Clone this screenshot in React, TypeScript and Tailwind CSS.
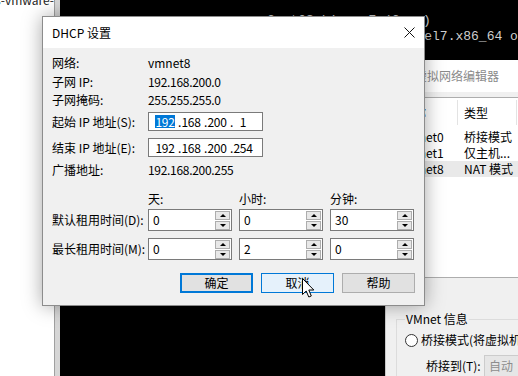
import React from "react";

const ui = "font-['Noto_Sans_CJK_SC',sans-serif]";

function Arrow({ up }: { up?: boolean }) {
  return (
    <div className="flex h-[9px] w-[15px] items-center justify-center border border-[#adadad] bg-[#e8e8e8]">
      {up ? (
        <span className="h-0 w-0 border-x-[3px] border-b-[3px] border-x-transparent border-b-black" />
      ) : (
        <span className="h-0 w-0 border-x-[3px] border-t-[3px] border-x-transparent border-t-black" />
      )}
    </div>
  );
}

function Spin({ value }: { value: string }) {
  return (
    <div className="flex h-[22px] w-[84px] items-center border border-[#7a7a7a] bg-white pr-[1px]">
      <span className="flex-1 pl-[4px] text-[12px] leading-none">{value}</span>
      <div className="flex flex-col gap-[1px]">
        <Arrow up />
        <Arrow />
      </div>
    </div>
  );
}

function IpBox({ parts, selectFirst }: { parts: string[]; selectFirst?: boolean }) {
  return (
    <div className="flex h-[19px] w-[115px] items-center border border-[#7a7a7a] bg-white pl-[7px] text-[12px] leading-[13px] tracking-[-0.4px]">
      {parts.map((p, i) => (
        <React.Fragment key={i}>
          {i > 0 && <span className="w-[8px] shrink-0 pr-[1px] text-right">.</span>}
          <span className="flex w-[18px] shrink-0 justify-center">
            <span className={i === 0 && selectFirst ? "bg-[#0078d7] px-[1px] text-white" : ""}>{p}</span>
          </span>
        </React.Fragment>
      ))}
    </div>
  );
}

function Btn({ label, kind }: { label: string; kind: "default" | "hover" | "plain" }) {
  const cls =
    kind === "default"
      ? "border-2 border-[#0078d7] bg-[#e1e1e1]"
      : kind === "hover"
      ? "border border-[#0078d7] bg-[#e5f1fb]"
      : "border border-[#adadad] bg-[#e1e1e1]";
  return (
    <div className={`flex h-[20px] w-[73px] items-center justify-center text-[12px] ${cls}`}>{label}</div>
  );
}

export default function App() {
  return (
    <div className={`relative flex h-[376px] w-[518px] overflow-hidden bg-white text-black ${ui}`}>
      {/* desktop behind */}
      <div className="flex w-[54px] shrink-0 items-start justify-end overflow-hidden bg-white">
        <div className="mt-[-8px] shrink-0 whitespace-nowrap text-[12px] leading-[16px] text-[#222]">centos-vmware-</div>
      </div>
      <div className="w-[6px] shrink-0 border-l border-[#a0a0a0] bg-[#d6d6d6]" />
      <div className="min-w-0 flex-1 overflow-hidden bg-black pt-[13px] font-['Liberation_Mono',monospace] text-[13px] leading-[16px] text-[#cfcfcf]">
        <div className="whitespace-pre pl-[207px]">CentOS Linux 7 (Core)</div>
        <div className="whitespace-pre pl-[216px]">Kernel 3.10.0-1160.el7.x86_64 on an x86_64</div>
      </div>

      {/* virtual network editor window */}
      <div className="absolute bottom-0 left-[385px] top-[60px] w-[140px] border-l border-[#c8c8c8] bg-[#f0f0f0]">
        <div className="flex h-[32px] items-center bg-white pl-[29px] text-[12px] text-[#8a8a8a]">虚拟网络编辑器</div>
        <div className="ml-[10px] mt-[5px] h-[181px] border border-[#adadad] bg-white text-[12px]">
          <div className="mt-[2px] flex h-[25px] items-center">
            <div className="h-full w-[61px] border-r border-[#e3e3e3] pl-[5px] leading-[25px]">名称</div>
            <div className="h-full w-[59px] border-r border-[#e3e3e3] pl-[6px] leading-[25px]">类型</div>
          </div>
          <div className="mt-[4px] flex flex-col">
            {[
              ["VMnet0", "桥接模式", false],
              ["VMnet1", "仅主机...", false],
              ["VMnet8", "NAT 模式", true],
            ].map(([n, t, sel]) => (
              <div key={n as string} className={`flex h-[16px] items-center ${sel ? "bg-[#e9e9e9]" : ""}`}>
                <div className="w-[61px] pl-[5px]">{n}</div>
                <div className="pl-[6px]">{t}</div>
              </div>
            ))}
          </div>
        </div>
        <fieldset className="ml-[10px] mt-[33px] h-[80px] border border-[#dcdcdc] pl-[8px] text-[12px]">
          <legend className="px-[1px] leading-[16px]">VMnet 信息</legend>
          <div className="mt-[5px] flex h-[16px] items-center gap-[3px] whitespace-nowrap">
            <span className="h-[13px] w-[13px] rounded-full border border-[#333] bg-white" />
            <span>桥接模式(将虚拟机连接到外部网络)</span>
          </div>
          <div className="mt-[7px] flex items-center whitespace-nowrap pl-[21px]">
            <span className="w-[58px]">桥接到(T):</span>
            <div className="flex h-[22px] w-[80px] items-center border border-[#cccccc] bg-[#e6e6e6] pl-[4px] text-[#8d8d8d]">自动</div>
          </div>
        </fieldset>
      </div>

      {/* DHCP dialog */}
      <div className="absolute left-[42px] top-[16px] flex h-[290px] w-[383px] flex-col border border-[#8c8c8c] bg-[#f0f0f0] text-[12px] shadow-[0_0_18px_rgba(0,0,0,0.35)]">
        <div className="flex h-[31px] items-center justify-between bg-white pl-[9px] pr-[9px]">
          <span>DHCP 设置</span>
          <svg width="11" height="11" viewBox="0 0 11 11">
            <path d="M0.5 0.5 L10.5 10.5 M10.5 0.5 L0.5 10.5" stroke="#111" strokeWidth="1" fill="none" />
          </svg>
        </div>
        <div className="flex flex-col pl-[9px] pt-[6px]">
          <div className="flex h-[18px] items-center">
            <span className="w-[96px]">网络:</span>
            <span>vmnet8</span>
          </div>
          <div className="flex h-[19px] items-center">
            <span className="w-[96px]">子网 IP:</span>
            <span className="tracking-[-0.3px]">192.168.200.0</span>
          </div>
          <div className="flex h-[18px] items-center">
            <span className="w-[96px]">子网掩码:</span>
            <span className="tracking-[-0.3px]">255.255.255.0</span>
          </div>
          <div className="mt-[3px] flex items-center">
            <span className="w-[96px]">起始 IP 地址(S):</span>
            <IpBox parts={["192", "168", "200", "1"]} selectFirst />
          </div>
          <div className="mt-[7px] flex items-center">
            <span className="w-[96px]">结束 IP 地址(E):</span>
            <IpBox parts={["192", "168", "200", "254"]} />
          </div>
          <div className="mt-[4px] flex h-[18px] items-center">
            <span className="w-[96px]">广播地址:</span>
            <span className="tracking-[-0.3px]">192.168.200.255</span>
          </div>
          <div className="mt-[11px] flex h-[18px] items-center">
            <span className="w-[96px]" />
            <span className="w-[91px]">天:</span>
            <span className="w-[91px]">小时:</span>
            <span>分钟:</span>
          </div>
          <div className="mt-[1px] flex items-center">
            <span className="w-[96px]">默认租用时间(D):</span>
            <div className="flex gap-[7px]">
              <Spin value="0" />
              <Spin value="0" />
              <Spin value="30" />
            </div>
          </div>
          <div className="mt-[7px] flex items-center">
            <span className="w-[96px]">最长租用时间(M):</span>
            <div className="flex gap-[7px]">
              <Spin value="0" />
              <Spin value="2" />
              <Spin value="0" />
            </div>
          </div>
        </div>
        <div className="mt-[13px] flex justify-end gap-[8px] pr-[9px]">
          <Btn label="确定" kind="default" />
          <Btn label="取消" kind="hover" />
          <Btn label="帮助" kind="plain" />
        </div>
      </div>

      {/* mouse pointer */}
      <svg className="absolute left-[302px] top-[278px]" width="13" height="20" viewBox="0 0 13 20">
        <path d="M0.5 0.5 L0.5 16.5 L4.2 13 L6.8 19 L9.3 18 L6.8 12 L11.8 12 Z" fill="white" stroke="black" strokeWidth="1" strokeLinejoin="round" />
      </svg>
    </div>
  );
}
